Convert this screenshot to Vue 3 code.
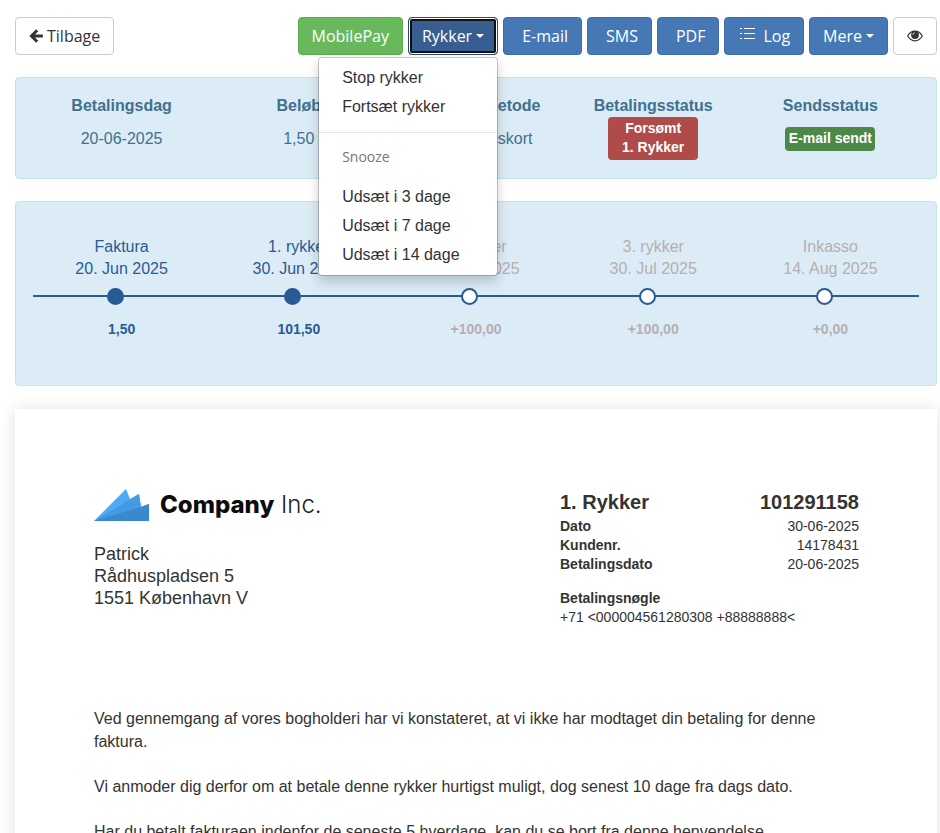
<script setup>
import { ref } from 'vue'

const menuOpen = ref(true)

const reminderActions = ['Stop rykker', 'Fortsæt rykker']
const snoozeActions = ['Udsæt i 3 dage', 'Udsæt i 7 dage', 'Udsæt i 14 dage']

const summary = [
  { label: 'Betalingsdag', value: '20-06-2025' },
  { label: 'Beløb', value: '1,50' },
  { label: 'Betalingsmetode', value: 'Indbetalingskort' },
  { label: 'Betalingsstatus', badge: ['Forsømt', '1. Rykker'], tone: 'danger' },
  { label: 'Sendsstatus', badge: ['E-mail sendt'], tone: 'success' },
]

const steps = [
  { name: 'Faktura', date: '20. Jun 2025', amount: '1,50', done: true },
  { name: '1. rykker', date: '30. Jun 2025', amount: '101,50', done: true },
  { name: '2. rykker', date: '15. Jul 2025', amount: '+100,00', done: false },
  { name: '3. rykker', date: '30. Jul 2025', amount: '+100,00', done: false },
  { name: 'Inkasso', date: '14. Aug 2025', amount: '+0,00', done: false },
]

const meta = [
  { label: 'Dato', value: '30-06-2025' },
  { label: 'Kundenr.', value: '14178431' },
  { label: 'Betalingsdato', value: '20-06-2025' },
]
</script>

<template>
  <div class="page">
    <header class="toolbar">
      <button type="button" class="btn btn-default back">
        <svg class="arrow" viewBox="0 0 14 14" aria-hidden="true">
          <path d="M8.200 1.300 2.500 7 8.200 12.700M3 7h10.800" fill="none" stroke="currentColor" stroke-width="3" />
        </svg>
        Tilbage
      </button>
      <button type="button" class="btn btn-success">MobilePay</button>
      <div class="dropdown">
        <button
          type="button"
          class="btn btn-primary"
          :class="{ open: menuOpen }"
          :aria-expanded="menuOpen"
          @click="menuOpen = !menuOpen"
        >
          Rykker <span class="caret"></span>
        </button>
        <div v-if="menuOpen" class="menu">
          <a v-for="item in reminderActions" :key="item" href="#" class="menu-item">{{ item }}</a>
          <div class="divider"></div>
          <div class="menu-header">Snooze</div>
          <a v-for="item in snoozeActions" :key="item" href="#" class="menu-item">{{ item }}</a>
        </div>
      </div>
      <button type="button" class="btn btn-primary lead">E-mail</button>
      <button type="button" class="btn btn-primary lead">SMS</button>
      <button type="button" class="btn btn-primary lead">PDF</button>
      <button type="button" class="btn btn-primary log">
        <svg class="list" viewBox="0 0 15 13" aria-hidden="true">
          <path d="M0 1.5h2M0 6.5h2M0 11.5h2M4 1.5h11M4 6.5h11M4 11.5h11" stroke="currentColor" stroke-width="1" />
        </svg>
        Log
      </button>
      <button type="button" class="btn btn-primary">Mere <span class="caret"></span></button>
      <button type="button" class="btn btn-default" aria-label="Vis">
        <svg class="eye" viewBox="0 0 16 12" aria-hidden="true">
          <path d="M.7 6C2.4 3 5 1.2 8 1.2S13.600 3 15.300 6C13.600 9 11 10.800 8 10.800S2.400 9 .7 6Z" fill="none" stroke="currentColor" stroke-width="1.2" />
          <circle cx="8" cy="5" r="3.900" fill="currentColor" />
          <path d="M5.800 5A2.200 2.200 0 0 1 8 2.800" fill="none" stroke="#fff" stroke-width=".7" />
        </svg>
      </button>
    </header>

    <section class="panel summary">
      <div v-for="item in summary" :key="item.label" class="cell">
        <strong>{{ item.label }}</strong>
        <div class="value">
          <span v-if="item.badge" class="badge" :class="item.tone">
            <span v-for="line in item.badge" :key="line">{{ line }}</span>
          </span>
          <template v-else>{{ item.value }}</template>
        </div>
      </div>
    </section>

    <section class="panel timeline">
      <div v-for="step in steps" :key="step.name" class="step" :class="{ done: step.done }">
        <span>{{ step.name }}</span>
        <span>{{ step.date }}</span>
        <div class="track"><i class="dot"></i></div>
        <strong>{{ step.amount }}</strong>
      </div>
    </section>

    <main class="paper">
      <div class="top">
        <div>
          <svg class="logo" viewBox="0 0 230 34" role="img" aria-label="Company Inc.">
            <path d="M0 33 32 1l4 10 9-5 2 13 8-3v17Z" fill="#4dabf5" />
            <path d="M0 33 45 6l2 13 8-3v17Z" fill="#429ae4" />
            <path d="M0 33 47 19l8-3v17Z" fill="#3b88cd" />
            <text x="66" y="25" class="brand">Company</text>
            <text x="187" y="25" class="suffix">Inc.</text>
          </svg>
          <address>Patrick<br />Rådhuspladsen 5<br />1551 København V</address>
        </div>
        <div class="details">
          <table>
            <thead>
              <tr>
                <th>1. Rykker</th>
                <th>101291158</th>
              </tr>
            </thead>
            <tbody>
              <tr v-for="row in meta" :key="row.label">
                <th>{{ row.label }}</th>
                <td>{{ row.value }}</td>
              </tr>
            </tbody>
          </table>
          <div class="key">
            <strong>Betalingsnøgle</strong>
            <span>+71 &lt;000004561280308 +88888888&lt;</span>
          </div>
        </div>
      </div>
      <div class="letter">
        <p>Ved gennemgang af vores bogholderi har vi konstateret, at vi ikke har modtaget din betaling for denne faktura.</p>
        <p>Vi anmoder dig derfor om at betale denne rykker hurtigst muligt, dog senest 10 dage fra dags dato.</p>
        <p>Har du betalt fakturaen indenfor de seneste 5 hverdage, kan du se bort fra denne henvendelse.</p>
      </div>
    </main>
  </div>
</template>

<style>
body {
  background: #fff;
}
</style>

<style scoped>
* {
  box-sizing: border-box;
}
.page {
  display: flex;
  flex-direction: column;
  height: 100vh;
  overflow: hidden;
  padding: 17px 3px 0 15px;
  font: 16px/23px "Liberation Sans", Arial, sans-serif;
  color: #333;
}
.toolbar {
  display: flex;
  flex: none;
  gap: 5px;
  margin-bottom: 22px;
}
.btn {
  display: flex;
  align-items: center;
  justify-content: center;
  height: 38px;
  padding: 0 13px;
  border: 1px solid;
  border-radius: 4px;
  font: 16px/22px "Open Sans", "Noto Sans", sans-serif;
  white-space: nowrap;
  cursor: pointer;
}
.btn-default {
  background: #fff;
  border-color: #ccc;
  color: #333;
}
.btn-success {
  background: #68b85c;
  border-color: #5aad4e;
  color: #fff;
}
.btn-primary {
  background: #4678b6;
  border-color: #3f6ca4;
  color: #fff;
}
.btn.open {
  background: #375d91;
  border-color: #2b4a73;
  box-shadow: inset 0 0 0 1px #fff, inset 0 0 0 3px #101010;
}
.back {
  gap: 4px;
  margin-right: auto;
}
.lead {
  padding-left: 18px;
}
.log {
  gap: 8px;
  padding-left: 15px;
}
.arrow {
  width: 14px;
  height: 14px;
}
.list {
  width: 15px;
  height: 13px;
  margin-bottom: 5px;
}
.eye {
  width: 16px;
  height: 12px;
}
.caret {
  margin-left: 4px;
  border-top: 4px solid;
  border-left: 4px solid transparent;
  border-right: 4px solid transparent;
}
.dropdown {
  position: relative;
}
.menu {
  position: absolute;
  z-index: 10;
  top: 40px;
  right: 0;
  width: 180px;
  padding: 5px 0 6px;
  background: #fff;
  border: 1px solid rgba(0, 0, 0, 0.2);
  border-radius: 4px;
  box-shadow: 0 6px 12px rgba(0, 0, 0, 0.18);
  background-clip: padding-box;
}
.menu-item {
  display: block;
  padding: 3px 23px;
  color: #333;
  text-decoration: none;
}
.divider {
  height: 1px;
  margin: 11px 0;
  background: #e5e5e5;
}
.menu-header {
  padding: 2px 23px 14px;
  font: 14px/22px "Open Sans", "Noto Sans", sans-serif;
  color: #777;
}
.panel {
  display: grid;
  flex: none;
  grid-template-columns: repeat(5, 1fr);
  padding: 0 17px;
  background: #dcecf6;
  border: 1px solid #c0e3ee;
  border-radius: 4px;
  text-align: center;
}
.summary {
  min-height: 102px;
  margin-bottom: 22px;
  padding-top: 16px;
  color: #42708f;
}
.value {
  display: flex;
  align-items: center;
  justify-content: center;
  height: 43px;
}
.badge {
  display: flex;
  flex-direction: column;
  min-width: 90px;
  padding: 2px 3px 3px;
  border-radius: 4px;
  color: #fff;
  font-size: 14px;
  font-weight: bold;
  line-height: 19px;
}
.danger {
  background: #af4b48;
}
.success {
  background: #4c8846;
}
.timeline {
  min-height: 185px;
  margin-bottom: 23px;
  padding-top: 34px;
  background: linear-gradient(#285a96, #285a96) center 93px / calc(100% - 34px) 2px no-repeat, #dcecf6;
}
.step {
  display: flex;
  flex-direction: column;
  line-height: 22px;
  color: #b5afaf;
}
.step.done {
  color: #285a96;
}
.step strong {
  margin-top: 13px;
  font-size: 14px;
}
.track {
  display: flex;
  justify-content: center;
  height: 17px;
  margin-top: 8px;
  padding-right: 12px;
}
.dot {
  width: 17px;
  height: 17px;
  border: 2px solid #285a96;
  border-radius: 50%;
  background: #fff;
}
.done .dot {
  background: #285a96;
}
.paper {
  flex: 1;
  padding: 79px 78px 0 79px;
  background: #fff;
  box-shadow: 0 0 15px rgba(0, 0, 0, 0.12);
}
.top {
  display: grid;
  grid-template-columns: 466fr 299fr;
  margin-bottom: 80px;
}
.logo {
  display: block;
  width: 230px;
  height: 34px;
}
.brand {
  font: 800 24px Inter, sans-serif;
  fill: #0c0c0c;
}
.suffix {
  font: 300 24px Inter, sans-serif;
  fill: #222;
}
address {
  margin-top: 21px;
  font-size: 18px;
  font-style: normal;
  line-height: 22px;
}
.details {
  font-size: 14px;
  line-height: 19px;
}
table {
  width: 100%;
  border-collapse: collapse;
}
th,
td {
  padding: 0;
  text-align: left;
}
tr > :last-child {
  text-align: right;
}
thead th {
  font-size: 20px;
  line-height: 28px;
  padding-bottom: 1px;
}
.key {
  display: flex;
  flex-direction: column;
  margin-top: 15px;
}
p {
  margin: 0 0 22px;
}
</style>
